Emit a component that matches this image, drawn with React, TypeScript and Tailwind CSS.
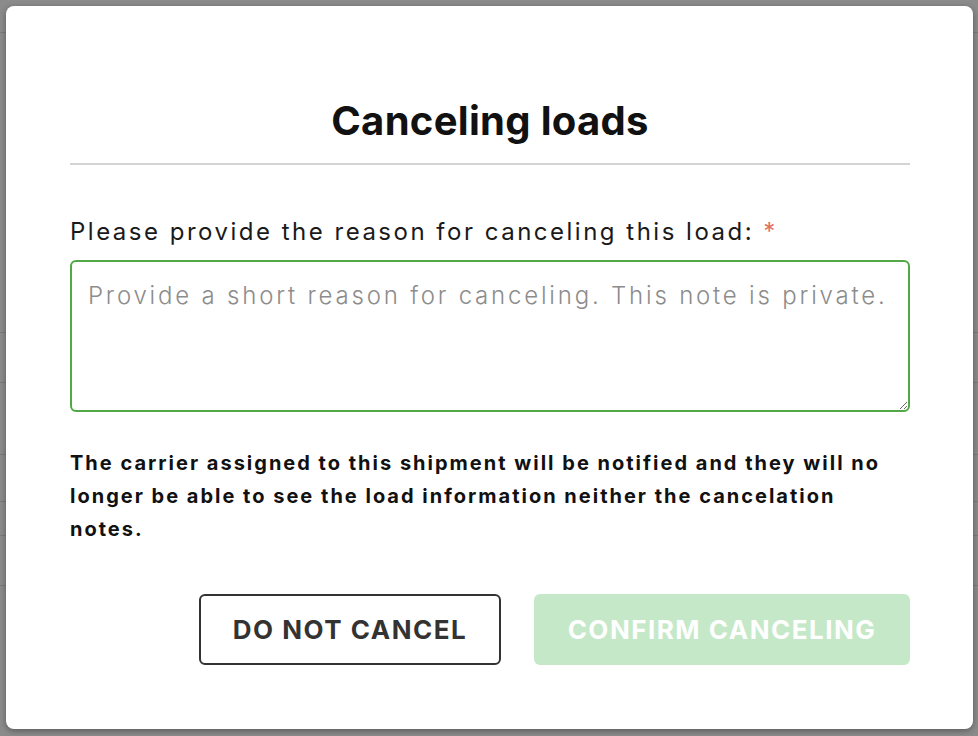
import React from "react";

const font = { fontFamily: "Inter, 'Noto Sans', sans-serif" };

export default function App() {
  return (
    <div className="relative h-[736px] w-[978px] overflow-hidden bg-[#8b8b8b]" style={font}>
      {/* background page rows behind overlay */}
      <div className="flex h-full flex-col">
        <div className="h-[33px] border-b border-[#7b7b7b]" />
        <div className="h-[300px] border-b border-[#7b7b7b]" />
        <div className="h-[50px] border-b border-[#7b7b7b]" />
        <div className="h-[72px] border-b border-[#7b7b7b]" />
        <div className="h-[47px] border-b border-[#7b7b7b]" />
        <div className="h-[34px] border-b border-[#7b7b7b]" />
        <div className="h-[50px] border-b border-[#7b7b7b]" />
        <div className="flex-1" />
      </div>

      {/* modal */}
      <div className="absolute left-[6px] top-[6px] flex h-[723px] w-[967px] flex-col rounded-[8px] bg-white pl-[64px] pr-[63px] shadow-[0_2px_6px_rgba(0,0,0,0.35)]">
        <h1 className="mt-[93px] text-center text-[40px] font-bold leading-[44px] tracking-[0.3px] text-[#111]">
          Canceling loads
        </h1>
        <div className="mt-[20px] h-[2px] bg-[#d4d4d4]" />
        <label className="mt-[51px] text-[24px] leading-[32px] tracking-[2.5px] text-[#1a1a1a]">
          Please provide the reason for canceling this load: <span className="text-[#e0705f]">*</span>
        </label>
        <textarea
          className="mt-[12px] h-[152px] w-full resize-y rounded-[6px] border-2 border-[#52a847] px-[16px] py-[18px] text-[24px] font-light leading-[32px] tracking-[2.8px] text-[#222] outline-none placeholder:text-[#8c8c8c]"
          placeholder="Provide a short reason for canceling. This note is private."
        />
        <p className="mt-[35px] text-[20px] font-bold leading-[33px] tracking-[2px] text-[#111]">
          The carrier assigned to this shipment will be notified and they will no longer be able to see the load information neither the cancelation notes.
        </p>
        <div className="mt-[48px] flex justify-end gap-[33px]">
          <button className="h-[71px] w-[302px] rounded-[6px] border-2 border-[#333] bg-white text-[26px] font-bold tracking-[1.5px] text-[#333]">
            DO NOT CANCEL
          </button>
          <button className="h-[71px] w-[376px] rounded-[6px] bg-[#c5e9c8] text-[26px] font-bold tracking-[1.5px] text-white">
            CONFIRM CANCELING
          </button>
        </div>
      </div>
    </div>
  );
}
